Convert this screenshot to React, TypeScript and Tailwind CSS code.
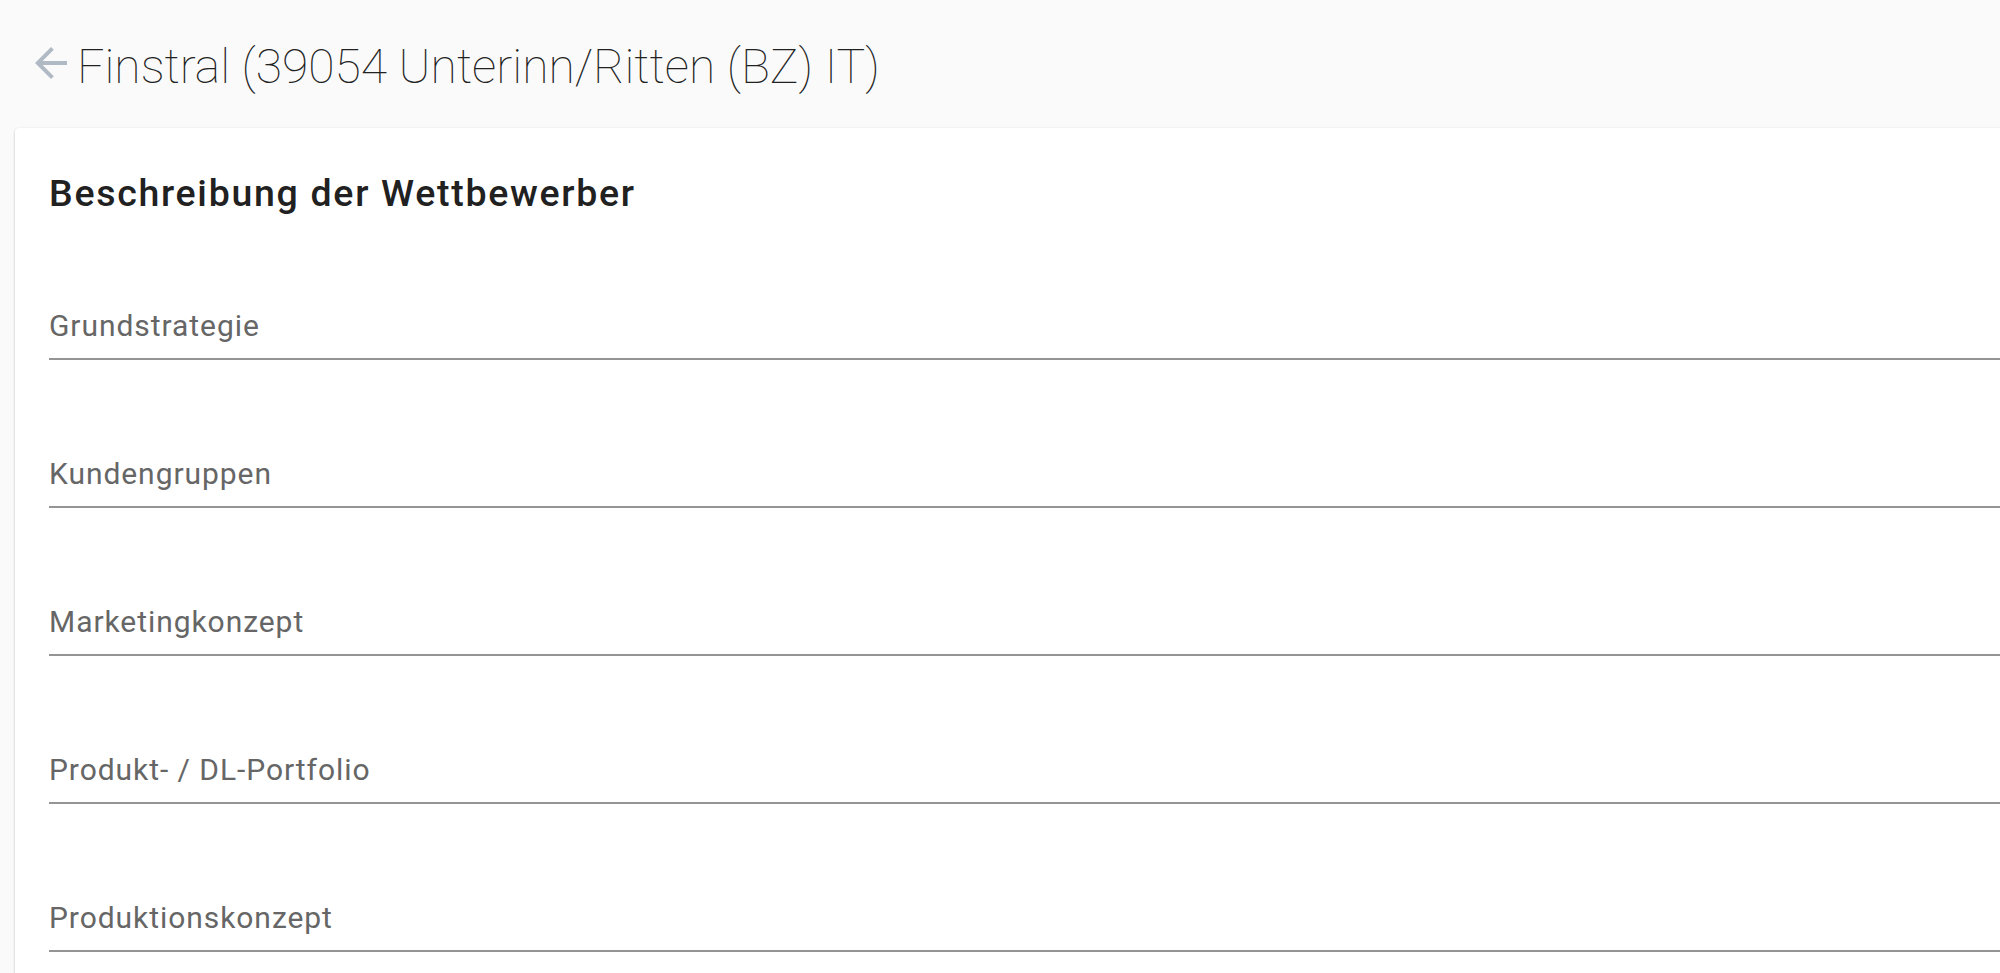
const fields = [
  "Grundstrategie",
  "Kundengruppen",
  "Marketingkonzept",
  "Produkt- / DL-Portfolio",
  "Produktionskonzept",
];

function ArrowBack() {
  return (
    <svg viewBox="0 0 24 24" className="w-12 h-12 shrink-0" fill="#b0bac5">
      <path d="M20 11H7.83l5.59-5.59L12 4l-8 8 8 8 1.41-1.41L7.83 13H20v-2z" />
    </svg>
  );
}

export default function App() {
  return (
    <div
      className="h-[973px] w-[2000px] overflow-hidden bg-[#fafafa]"
      style={{ fontFamily: "Roboto, 'Noto Sans', sans-serif" }}
    >
      {/* Header */}
      <div className="flex items-start pl-[27px] pt-[39px]">
        <ArrowBack />
        <h1 className="ml-[2px] text-[48px] leading-[56px] font-thin text-[#212121] whitespace-nowrap">
          Finstral (39054 Unterinn/Ritten (BZ) IT)
        </h1>
      </div>

      {/* Card */}
      <div className="mt-[33px] ml-[15px] w-[2100px] bg-white rounded-[4px] shadow-[0_1px_3px_rgba(0,0,0,0.2),0_1px_1px_rgba(0,0,0,0.14),0_2px_1px_-1px_rgba(0,0,0,0.12)] pl-[34px] pt-[46px] pb-[100px]">
        <h2 className="text-[37.5px] leading-[38px] font-medium tracking-[1.7px] text-[#212121]">
          Beschreibung der Wettbewerber
        </h2>
        <div className="flex flex-col">
          {fields.map((f) => (
            <div key={f} className="pt-[96px]">
              <div className="pb-[14px] border-b-2 border-[#949494]">
                <span className="block text-[30px] leading-[36px] tracking-[0.94px] text-[#666666]">
                  {f}
                </span>
              </div>
            </div>
          ))}
        </div>
      </div>
    </div>
  );
}
